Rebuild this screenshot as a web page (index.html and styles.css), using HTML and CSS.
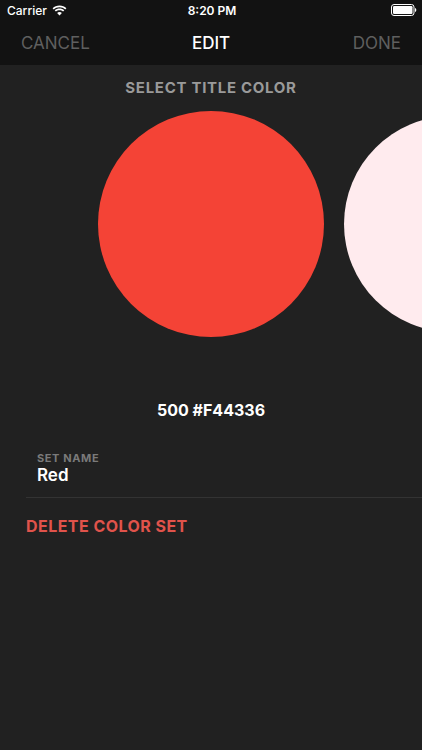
FILE: index.html
```html
<!DOCTYPE html>
<html>
<head>
<meta charset="utf-8">
<link rel="stylesheet" href="styles.css">
</head>
<body>
<div class="screen">
  <header class="top">
    <div class="status">
      <div class="status-left">
        <span>Carrier</span>
        <svg class="wifi" width="15" height="11" viewBox="0 0 15 11">
          <path d="M7.5 2.2c2.2 0 4.2.85 5.7 2.25l1.2-1.25C12.6 1.5 10.2.5 7.5.5S2.4 1.5.6 3.2l1.2 1.25C3.3 3.05 5.3 2.2 7.5 2.2z" fill="#fff"/>
          <path d="M7.5 5.2c1.4 0 2.6.5 3.6 1.4l1.2-1.25C11 4.15 9.3 3.5 7.5 3.5s-3.5.65-4.8 1.85L3.9 6.6C4.9 5.7 6.1 5.2 7.5 5.2z" fill="#fff"/>
          <path d="M7.5 10.5l2.4-2.5c-.65-.6-1.5-.95-2.4-.95s-1.75.35-2.4.95z" fill="#fff"/>
        </svg>
      </div>
      <div class="status-time">8:20 PM</div>
      <div class="status-right">
        <svg width="26" height="12" viewBox="0 0 26 12">
          <rect x="0.5" y="0.5" width="22.5" height="11" rx="2.5" fill="none" stroke="#fff" stroke-width="1"/>
          <rect x="2" y="2" width="19.5" height="8" rx="1.2" fill="#fff"/>
          <path d="M24 4v4c.8-.2 1.3-1 1.3-2s-.5-1.8-1.3-2z" fill="#fff"/>
        </svg>
      </div>
    </div>
    <nav class="navbar">
      <span class="nav-btn">CANCEL</span>
      <span class="nav-title">EDIT</span>
      <span class="nav-btn">DONE</span>
    </nav>
  </header>

  <main class="content">
    <h2 class="section-title">SELECT TITLE COLOR</h2>
    <div class="carousel">
      <div class="swatch swatch-main"></div>
      <div class="swatch swatch-next"></div>
    </div>
    <div class="hex">500 #F44336</div>

    <div class="field">
      <div class="field-label">SET NAME</div>
      <div class="field-value">Red</div>
    </div>

    <div class="delete">DELETE COLOR SET</div>
  </main>
</div>
</body>
</html>
```

FILE: styles.css
```css
* { box-sizing: border-box; }
html, body {
  margin: 0;
  padding: 0;
  background: #212121;
}
body {
  font-family: Inter, "Noto Sans", sans-serif;
  color: #fff;
}
.screen {
  width: 422px;
  height: 750px;
  overflow: hidden;
  background: #212121;
}
.top {
  background: #121212;
  height: 65px;
}
.status {
  height: 20px;
  display: flex;
  align-items: center;
  justify-content: space-between;
  padding: 0 5px 0 7px;
  font-size: 12px;
  font-weight: 500;
}
.status-left {
  display: flex;
  align-items: center;
  gap: 5px;
  width: 100px;
}
.status-time {
  font-weight: 600;
}
.status-right {
  width: 100px;
  display: flex;
  justify-content: flex-end;
}
.navbar {
  height: 45px;
  display: flex;
  align-items: center;
  justify-content: space-between;
  padding: 0 21px;
  font-size: 17px;
}
.nav-btn {
  color: #5f5f5f;
  width: 70px;
}
.nav-btn:last-child { text-align: right; }
.nav-title {
  font-weight: 500;
  color: #fff;
}
.content {
  display: flex;
  flex-direction: column;
}
.section-title {
  margin: 14px 0 0;
  text-align: center;
  font-size: 15px;
  font-weight: 700;
  color: #9a9a9a;
  line-height: 18px;
  letter-spacing: 0.7px;
}
.carousel {
  display: flex;
  align-items: center;
  gap: 20px;
  padding-left: 98px;
  margin-top: 13px;
  height: 228px;
  overflow: hidden;
}
.swatch {
  flex: none;
  border-radius: 50%;
}
.swatch-main {
  width: 226px;
  height: 226px;
  background: #f44336;
}
.swatch-next {
  width: 216px;
  height: 216px;
  background: #ffebee;
}
.hex {
  margin-top: 62px;
  text-align: center;
  font-size: 16px;
  font-weight: 700;
  line-height: 20px;
}
.field {
  margin: 32px 0 0 26px;
  padding: 0 0 12px 11px;
  border-bottom: 1px solid #333;
}
.field-label {
  font-size: 11px;
  font-weight: 700;
  color: #7a7a7a;
  line-height: 13px;
  letter-spacing: 0.6px;
}
.field-value {
  font-size: 17px;
  font-weight: 600;
  line-height: 20px;
}
.delete {
  margin: 18px 0 0 26px;
  font-size: 16px;
  font-weight: 700;
  color: #e0534b;
  line-height: 20px;
  letter-spacing: 0.45px;
}
```
